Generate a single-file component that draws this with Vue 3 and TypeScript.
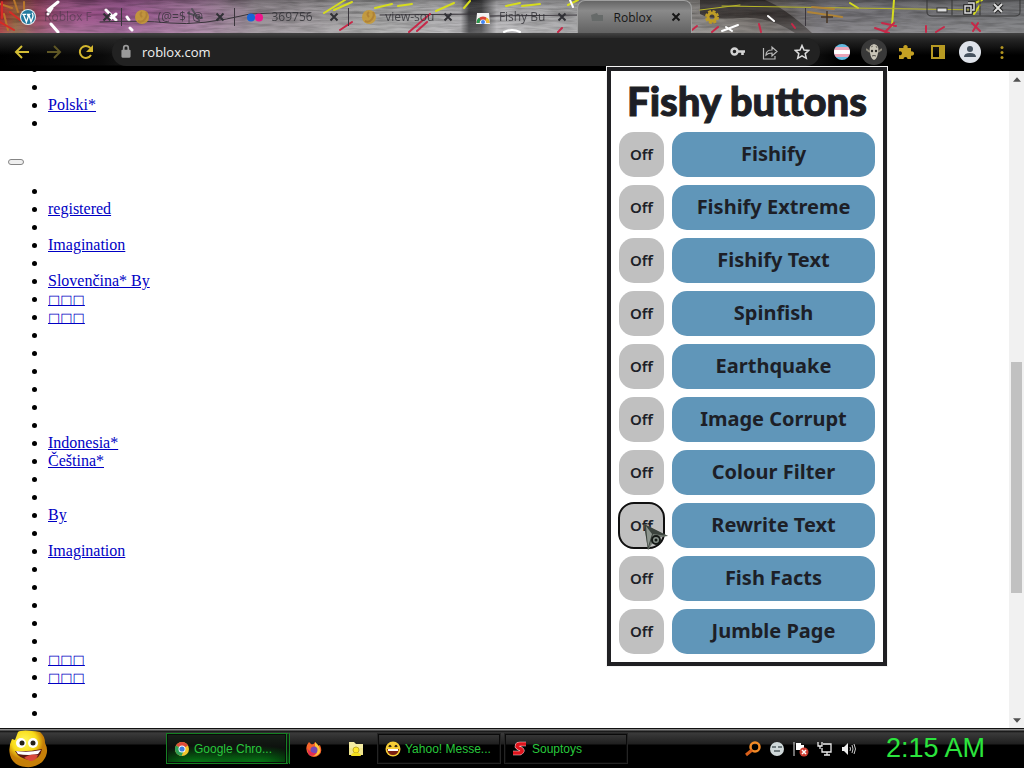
<script setup lang="ts">
import { ref } from 'vue'

interface Tab { title: string; icon: string; faint?: boolean }
interface Toggle { label: string; on: boolean }

const tabs: Tab[] = [
  { title: 'Roblox F', icon: 'wordpress', faint: true },
  { title: '(@=$|@', icon: 'swirl' },
  { title: '369756', icon: 'flickr' },
  { title: 'view-sou', icon: 'swirl' },
  { title: 'Fishy Bu', icon: 'store' },
  { title: 'Roblox', icon: 'folder' },
  { title: '', icon: 'gear' },
]
const activeTab = 5

const firstList: string[] = ['', '', 'Polski*', '']
const secondList: string[] = [
  '', 'registered', '', 'Imagination', '', 'Slovenčina* By', '□□□', '□□□', '', '',
  '', '', '', '', 'Indonesia*', 'Čeština*', '', '', 'By', '',
  'Imagination', '', '', '', '', '', '□□□', '□□□', '', '',
]

const toggles = ref<Toggle[]>([
  'Fishify', 'Fishify Extreme', 'Fishify Text', 'Spinfish', 'Earthquake',
  'Image Corrupt', 'Colour Filter', 'Rewrite Text', 'Fish Facts', 'Jumble Page',
].map((label) => ({ label, on: false })))
const focused = 7

const scroll = { start: 44, size: 37 }
const flip = (t: Toggle) => { t.on = !t.on }
</script>

<template>
  <div class="desktop">
    <header class="tabstrip">
      <svg class="collage" viewBox="0 0 1024 33" preserveAspectRatio="none" aria-hidden="true">
        <defs>
          <linearGradient id="base">
            <stop offset="0" stop-color="#a8262c" /><stop offset=".015" stop-color="#8a5a34" />
            <stop offset=".035" stop-color="#93405c" /><stop offset=".06" stop-color="#9c5084" />
            <stop offset=".12" stop-color="#94508a" /><stop offset=".19" stop-color="#a0749a" />
            <stop offset=".25" stop-color="#928890" /><stop offset=".36" stop-color="#a2a2a2" />
            <stop offset=".45" stop-color="#aeadb0" /><stop offset=".458" stop-color="#3b3b3e" />
            <stop offset=".47" stop-color="#404042" /><stop offset=".485" stop-color="#b3b2b5" />
            <stop offset=".6" stop-color="#9a9a9b" /><stop offset=".7" stop-color="#817d79" />
            <stop offset=".75" stop-color="#66605c" /><stop offset=".8" stop-color="#747277" />
            <stop offset="1" stop-color="#747578" />
          </linearGradient>
          <linearGradient id="lift" x2="0" y2="1">
            <stop offset="0" stop-color="#000" stop-opacity=".25" /><stop offset=".4" stop-color="#fff" stop-opacity="0" />
            <stop offset="1" stop-color="#fff" stop-opacity=".2" />
          </linearGradient>
          <filter id="grain" x="0" y="0" width="1" height="1">
            <feTurbulence type="fractalNoise" baseFrequency=".04 .35" numOctaves="3" seed="4" />
            <feColorMatrix values="0 0 0 0 0  0 0 0 0 0  0 0 0 0 0  1.6 0 0 0 -.6" />
          </filter>
        </defs>
        <rect width="1024" height="33" fill="url(#base)" />
        <path d="M700 0H765Q785 8 812 33H795Q770 16 740 18T700 14Z" fill="#2b2624" opacity=".75" />
        <rect width="1024" height="33" filter="url(#grain)" opacity=".35" />
        <rect width="1024" height="33" fill="url(#lift)" />
        <g fill="none" stroke-linecap="round">
          <path d="M0 4L12 8 M4 14L8 30 M14 0L18 12 M24 2V14" stroke="#b8762c" stroke-width="2" />
          <path d="M0 22L14 30 M10 12L20 20 M2 2V18" stroke="#d62b26" stroke-width="2" />
          <path d="M48 10L58 2 M52 8L48 14 M51 24L58 32 M106 10L116 20 M116 14L110 19 M127 17L129 20 M130 28L132 30" stroke="#fff" stroke-width="3" />
          <path d="M100 22Q140 20 170 23T250 14Q280 12 310 13M380 15L480 14 M490 16L580 15" stroke="#38343a" stroke-width="1" />
          <path d="M192 9L199 20 M188 13L202 18" stroke="#57505c" stroke-width="2" />
          <path d="M324 13L345 0 M334 10L352 2 M375 8L392 4 M398 6L412 4 M436 11L454 3 M464 8L470 1 M506 6L520 3 M522 6L540 4 M568 5L578 0 M850 3L858 8 M894 0L892 26 M970 5L982 0 M974 14L980 5" stroke="#d6dc1e" stroke-width="2" />
          <path d="M722 6L980 10M700 10L740 5" stroke="#b8b629" stroke-width="1" />
          <path d="M808 12L842 17 M812 7L834 9" stroke="#b08436" stroke-width="2" />
          <path d="M340 30L352 22 M409 32L430 14 M417 31L427 22 M558 32L562 28 M692 30L697 26 M712 32L718 27 M759 24L761 32 M792 24L795 28 M875 28L889 33 M882 23L896 26 M885 32L894 23 M926 26V32 M936 32L944 27 M972 23L980 31 M978 23L973 31" stroke="#c72848" stroke-width="2" />
          <path d="M722 31L738 25 M726 27L732 31 M768 16L774 21 M504 32Q512 28 520 32 M570 0L573 7" stroke="#fff" stroke-width="2" />
          <path d="M927 0V12Q927 16 932 16H1015Q1020 16 1020 12V0M952 0V15M980 0V15" stroke="#353535" stroke-width="1" />
        </g>
      </svg>

      <nav class="tabs" role="tablist" aria-label="Tabs">
        <div v-for="(tab, i) in tabs" :key="i" class="tab" :class="{ active: i === activeTab, plain: i === 3 || i + 1 === activeTab, faint: tab.faint }">
          <button class="tab-main" role="tab" :aria-selected="i === activeTab" :aria-label="tab.title || 'Settings'">
            <svg class="fav" viewBox="0 0 16 16" aria-hidden="true">
              <g v-if="tab.icon === 'wordpress'">
                <circle cx="8" cy="8" r="8" fill="#e6f1f5" /><circle cx="8" cy="8" r="7" fill="#22799e" />
                <path d="M2.3 5.3H6M3.4 5.3L6.4 13L8.3 7.5L7.4 5.3H10.5M8.8 5.3L11 13L13 7.6Q13.2 5.7 12.1 3.7" fill="none" stroke="#fff" stroke-width="1.3" />
              </g>
              <g v-else-if="tab.icon === 'swirl'">
                <circle cx="8" cy="8" r="7" fill="#c69a35" opacity=".9" />
                <path d="M4 12Q8 14 11 10T12 3M8 3Q5 5 8 8" fill="none" stroke="#b08236" stroke-width="2" />
              </g>
              <g v-else-if="tab.icon === 'flickr'">
                <circle cx="4" cy="8.500" r="4" fill="#1765d6" /><circle cx="12" cy="8.500" r="4" fill="#f0148b" />
              </g>
              <g v-else-if="tab.icon === 'store'">
                <path d="M2 4H14L15 15H1Z" fill="#f1f1f1" /><path d="M3 14A5 5 0 0 1 13 14" fill="none" stroke="#db4437" stroke-width="3" />
                <path d="M3 14Q3 11 5 10" fill="none" stroke="#269a50" stroke-width="3" /><path d="M11 10Q13 11 13 14" fill="none" stroke="#f4c432" stroke-width="3" />
                <circle cx="8" cy="13" r="2" fill="#4285f4" />
              </g>
              <path v-else-if="tab.icon === 'folder'" d="M1 6L7 4L8 6H13V12H2Z" fill="#666a69" />
              <g v-else fill="none" stroke="#bd9c27">
                <circle cx="8" cy="8" r="4" stroke-width="3" /><circle cx="8" cy="8" r="6" stroke-width="2" stroke-dasharray="3 1.7" />
              </g>
            </svg>
            <span class="tab-title">{{ tab.title }}</span>
          </button>
          <button v-if="tab.title" class="close" aria-label="Close tab">
            <svg viewBox="0 0 10 10"><path d="M1.5 1.5L8.5 8.5M8.5 1.5L1.5 8.5" stroke="currentColor" stroke-width="2" /></svg>
          </button>
        </div>
      </nav>
      <button class="new-tab" aria-label="New tab"><svg viewBox="0 0 12 12"><path d="M6 0V12M0 6H12" stroke="#453424" stroke-width="1.500" /></svg></button>
      <div class="window-buttons">
        <button aria-label="Minimize"><svg viewBox="0 0 16 16"><rect x="3" y="8" width="10" height="4" fill="#ddd" stroke="#333" /></svg></button>
        <button aria-label="Restore"><svg viewBox="0 0 16 16"><g fill="none"><path d="M6 3H12V10H10M3 6H9V13H3Z" stroke="#222" stroke-width="3.500" /><path d="M6 3H12V10H10M3 6H9V13H3Z" stroke="#ddd" stroke-width="1.500" /></g></svg></button>
        <button aria-label="Close"><svg viewBox="0 0 16 16"><g fill="none"><path d="M4 4L12 12M12 4L4 12" stroke="#222" stroke-width="4" /><path d="M4 4L12 12M12 4L4 12" stroke="#ddd" stroke-width="2" /></g></svg></button>
      </div>
    </header>

    <div class="toolbar">
      <div class="nav-buttons">
        <button aria-label="Back"><svg viewBox="0 0 16 16"><path d="M15 8H2M8 2L2 8L8 14" fill="none" stroke="#d3bd35" stroke-width="2" /></svg></button>
        <button aria-label="Forward"><svg viewBox="0 0 16 16"><path d="M1 8H14M8 2L14 8L8 14" fill="none" stroke="#5f5725" stroke-width="2" /></svg></button>
        <button aria-label="Reload"><svg viewBox="0 0 16 16"><path d="M13 11A6 6 0 1 1 12.4 4" fill="none" stroke="#d3b62e" stroke-width="2" /><path d="M15 1V8H8Z" fill="#d3b62e" /></svg></button>
      </div>
      <div class="address">
        <svg class="lock" viewBox="0 0 10 14" aria-hidden="true"><rect x="1" y="5" width="8" height="7" rx="1" fill="#9b9b9b" /><path d="M3 6V3.5A2 2 0 0 1 7 3.5V6" fill="none" stroke="#9b9b9b" stroke-width="1.5" /></svg>
        <input type="text" value="roblox.com" aria-label="Address" />
        <button aria-label="Passwords"><svg viewBox="0 0 16 16"><circle cx="4.5" cy="7.5" r="3" fill="none" stroke="#d4d4d4" stroke-width="2.4" /><path d="M7 7.5H15M12.5 7V11" stroke="#d4d4d4" stroke-width="2.6" /></svg></button>
        <button aria-label="Share"><svg viewBox="0 0 16 16"><path d="M1.5 4V15H13V12M4 11Q4 6 10 6V3L15 7.5L10 12V9Q6 9 4 11Z" fill="none" stroke="#b9b9b9" stroke-width="1.2" /></svg></button>
        <button aria-label="Bookmark"><svg viewBox="0 0 16 16"><path d="M8 1.5L10 6L14.8 6.4L11.2 9.6L12.3 14.3L8 11.8L3.7 14.3L4.8 9.6L1.2 6.4L6 6Z" fill="none" stroke="#ddd" stroke-width="1.5" /></svg></button>
      </div>
      <div class="extensions">
        <button aria-label="Flag extension"><svg viewBox="0 0 16 16"><clipPath id="disc"><circle cx="8" cy="8" r="8" /></clipPath><g clip-path="url(#disc)"><path fill="#62b9df" d="M0 0H16V16H0Z" /><path fill="#eba5b8" d="M0 3H16V13H0Z" /><path fill="#fff" d="M0 6H16V10H0Z" /></g></svg></button>
        <button class="current" aria-label="Fishy buttons"><svg viewBox="0 0 16 16"><path d="M0 5L4 8M16 5L12 8" stroke="#8b877a" stroke-width="2" /><path d="M8 0Q14 1 12 9Q11 15 8 16Q5 15 4 9Q2 1 8 0Z" fill="#c8c4b7" /><path d="M5 3L7 2M10 2L11 4" stroke="#777368" /><circle cx="6" cy="7" r="1.2" fill="#2b2926" /><circle cx="10" cy="7" r="1.2" fill="#2b2926" /><path d="M6 12Q8 11 10 12" fill="none" stroke="#514d47" /></svg></button>
        <button aria-label="Extensions"><svg viewBox="0 0 16 16"><path d="M2 4H5.5A2.2 2.2 0 1 1 9.5 4H13V7.5A2.2 2.2 0 1 1 13 11.5V15H9.5A2 2 0 1 0 5.5 15H1V11A2 2 0 1 0 1 7.500V4Z" fill="#c4a023" /></svg></button>
        <button aria-label="Side panel"><svg viewBox="0 0 16 16"><path d="M2 2H14V14H2Z" fill="none" stroke="#b79a22" stroke-width="2" /><path d="M9 2H14V14H9Z" fill="#b79a22" /></svg></button>
        <button aria-label="Profile"><svg class="avatar" viewBox="0 0 22 22"><circle cx="11" cy="11" r="11" fill="#dfe3ea" /><circle cx="11" cy="8" r="3" fill="#46525f" /><path d="M5 16Q5 12 11 12T17 16Z" fill="#46525f" /></svg></button>
        <button aria-label="Menu"><svg viewBox="0 0 16 16" fill="#b39520"><circle cx="8" cy="3.500" r="1.500" /><circle cx="8" cy="8.500" r="1.500" /><circle cx="8" cy="13.500" r="1.500" /></svg></button>
      </div>
    </div>

    <div class="viewport">
      <main class="page">
        <ul class="first">
          <li v-for="(item, i) in firstList" :key="i"><a v-if="item" href="#">{{ item }}</a></li>
        </ul>
        <div class="blank-line"><button class="tiny" aria-label="More"></button></div>
        <ul>
          <li v-for="(item, i) in secondList" :key="i"><a v-if="item" href="#" :class="{ boxes: item === '□□□' }">{{ item }}</a></li>
        </ul>
      </main>
      <div class="scrollbar">
        <button aria-label="Scroll up"><svg viewBox="0 0 9 5"><path d="M0 5L4.500 0L9 5Z" fill="#505050" /></svg></button>
        <div class="track">
          <div class="thumb" :style="{ top: scroll.start + '%', height: scroll.size + '%' }"></div>
        </div>
        <button aria-label="Scroll down"><svg viewBox="0 0 9 5"><path d="M0 0L4.500 5L9 0Z" fill="#505050" /></svg></button>
      </div>
    </div>

    <section class="popup" aria-labelledby="popup-title">
      <h1 id="popup-title">Fishy buttons</h1>
      <div v-for="(t, i) in toggles" :key="t.label" class="toggle-row">
        <button class="state" :class="{ focused: i === focused }" :aria-label="t.label + ' state'" @click="flip(t)">
          {{ t.on ? 'On' : 'Off' }}
          <svg v-if="i === focused" class="cursor" viewBox="0 0 26 28" aria-hidden="true">
            <path d="M1 1L25 13L13 15L5 27Z" fill="#747c74" /><path d="M1 1L25 13L10 11L5 27Z" fill="#3b433d" />
            <path d="M3 3L9 11L5 24Z" fill="#8d958e" />
            <circle cx="13" cy="17" r="4" fill="#87918a" stroke="#151a17" stroke-width="2" /><circle cx="13" cy="17" r="1.500" fill="#151a17" />
          </svg>
        </button>
        <button class="action" @click="flip(t)">{{ t.label }}</button>
      </div>
    </section>

    <footer class="taskbar">
      <button class="start" aria-label="Start">
        <svg viewBox="0 0 40 38"><defs><radialGradient id="face" cx=".4" cy=".3"><stop offset="0" stop-color="#fff95e" /><stop offset=".65" stop-color="#f9dc19" /><stop offset="1" stop-color="#c67f08" /></radialGradient></defs>
          <path d="M10 2Q14 -1 32 2Q37 6 37 13Q42 22 35 31Q28 38 18 37Q5 36 2 25Q0 17 4 9L7 10Z" fill="url(#face)" />
          <circle cx="13" cy="13" r="5" fill="#fff" /><circle cx="25" cy="13" r="5" fill="#fff" /><circle cx="14" cy="13" r="2.500" fill="#242018" /><circle cx="25" cy="13" r="2.500" fill="#242018" />
          <path d="M7 21Q20 22 34 19Q32 30 22 30Q11 29 7 21Z" fill="#5a1710" /><path d="M8 21Q20 23 33 20L30 24Q20 26 10 24Z" fill="#fff" /><path d="M16 28Q22 23 30 25Q28 31 22 31Z" fill="#d8483a" /></svg>
      </button>
      <div class="tasks">
        <button class="task lit">
          <svg viewBox="0 0 16 16" aria-hidden="true"><circle cx="8" cy="8" r="7" fill="#f3c62f" /><path d="M8 8L2 4.400A7 7 0 0 1 14 4.400Z" fill="#de4b3b" /><path d="M8 8L2 4.400A7 7 0 0 0 7.500 15L10 9Z" fill="#2f9f56" /><circle cx="8" cy="8" r="3.500" fill="#fff" /><circle cx="8" cy="8" r="2.600" fill="#3e7de0" /></svg>
          <span>Google Chro...</span>
        </button>
        <button class="quick" aria-label="Firefox">
          <svg viewBox="0 0 16 16"><path d="M1 4L3 1L5 3Q8 4 9 1L12 5L14 4Q17 11 13 14Q8 18 3 14Q-1 10 1 4Z" fill="#f5652b" /><path d="M9 1Q15 6 14 11Q12 15 8 15Q13 11 9 5Z" fill="#ffc43a" /><circle cx="8" cy="9" r="3.500" fill="#7549b5" /><path d="M1 7Q5 13 11 12Q7 16 3 14Z" fill="#e12e55" /></svg>
        </button>
        <button class="quick" aria-label="Folder">
          <svg viewBox="0 0 16 16"><path d="M1 1H6L8 3H15V14H1Z" fill="#f5eca3" /><path d="M1 7H15V14H1Z" fill="#efe58c" /><circle cx="8" cy="9" r="3" fill="#ffe928" stroke="#c3ab24" /><path d="M3 15Q4 11 8 12Q12 11 13 15Z" fill="#f3df1d" /></svg>
        </button>
        <button class="task">
          <svg viewBox="0 0 16 16" aria-hidden="true"><circle cx="8" cy="8" r="7.500" fill="#f6cd35" /><path d="M4 6Q5 3 6 6M10 6Q11 3 12 6" fill="none" stroke="#342512" stroke-width="1.500" /><path d="M2 8H14Q13 14 8 14T2 8Z" fill="#781d12" /><path d="M3 8H13V10H3Z" fill="#fff" /></svg>
          <span>Yahoo! Messe...</span>
        </button>
        <button class="task">
          <svg viewBox="0 0 16 16" aria-hidden="true"><path d="M14 3H8Q5 3 5 5.500Q6 7 9 8Q12 10 8 12H1" fill="none" stroke="#f0dada" stroke-width="4.500" /><path d="M14 3H8Q5 3 5 5.500Q6 7 9 8Q12 10 8 12H1" fill="none" stroke="#e0141d" stroke-width="3.500" /></svg>
          <span>Souptoys</span>
        </button>
      </div>
      <div class="tray">
        <svg viewBox="0 0 16 16"><circle cx="10" cy="6" r="4.500" fill="none" stroke="#f28a26" stroke-width="2.500" /><path d="M7 9L1 14" stroke="#d9601b" stroke-width="3" /></svg>
        <svg viewBox="0 0 16 16"><circle cx="8" cy="8" r="7" fill="#cfd8d9" /><path d="M3 6H7M9 6H13M5 10H11" fill="none" stroke="#515c60" stroke-width="1.300" /></svg>
        <svg viewBox="0 0 16 16"><path d="M1 1V15" stroke="#ddd" /><path d="M3 2H8V4H11V9H3Z" fill="#fff" /><circle cx="11" cy="11" r="4.500" fill="#cf3e32" /><path d="M9 9L13 13M13 9L9 13" stroke="#fff" stroke-width="1.500" /></svg>
        <svg viewBox="0 0 16 16"><path d="M6 3H14V11H5V7M10 11V14M7 14H13M1 1V5H5V1M3 5V8" fill="none" stroke="#ececec" stroke-width="1.300" /></svg>
        <svg viewBox="0 0 16 16"><path d="M1 6H3L7 2V14L3 10H1Z" fill="#eee" /><path d="M9 6Q10 8 9 10M11 4Q13 8 11 12M13 3Q16 8 13 13" fill="none" stroke="#ccc" /></svg>
      </div>
      <time class="clock">2:15 AM</time>
    </footer>
  </div>
</template>

<style>
html, body { margin: 0; background: #fff; }
</style>

<style scoped>
* { box-sizing: border-box; }
.desktop { position: relative; display: flex; flex-direction: column; height: 100vh; min-height: 360px; overflow: hidden; background: #fff; }
button { border: 0; padding: 0; margin: 0; background: none; font: inherit; color: inherit; cursor: default; }
svg { display: block; flex: none; }

.tabstrip { position: relative; display: flex; flex: none; height: 33px; background: #777; font-family: "Open Sans", "Noto Sans", sans-serif; font-size: 12px; color: #303035; }
.collage { position: absolute; inset: 0; width: 100%; height: 100%; }
.tabs { position: relative; display: flex; flex: 0 1 798px; min-width: 0; margin-left: 8px; }
.tab { display: flex; flex: 1 1 0; min-width: 0; align-items: center; padding: 0 10px 0 12px; background: linear-gradient(#3b363d, #3b363d) right center / 1px 18px no-repeat; }
.tab.plain { background: none; }
.tab.active { border: 1px solid #a0a0a0; border-bottom: 0; border-radius: 8px 8px 0 0; background: linear-gradient(#656565, #8a8a8a 30%, #626262); color: #161616; }
.tab-main { display: flex; flex: 1; min-width: 0; align-items: center; gap: 8px; height: 32px; }
.fav { width: 16px; height: 16px; }
.tab-title { overflow: hidden; white-space: nowrap; opacity: .8; }
.tab.active .tab-title { opacity: 1; }
.tab.faint .tab-title { opacity: .45; }
.close svg { width: 10px; height: 10px; }
.tab.faint .close { color: #303035; }
.new-tab { position: relative; margin-left: 15px; }
.new-tab svg { width: 12px; height: 12px; }
.window-buttons { position: relative; display: flex; gap: 12px; height: 16px; margin-left: auto; padding-right: 18px; }
.window-buttons svg { width: 16px; height: 16px; }

.toolbar { display: flex; flex: none; align-items: center; height: 38px; background: linear-gradient(#424242, #262626 6px, transparent 22px), linear-gradient(transparent 32px, #000 33px), linear-gradient(90deg, #000, #0a0a0a 10%, #222 15%, #222 76%, #000 82%); }
.toolbar svg { width: 16px; height: 16px; }
.nav-buttons { display: flex; gap: 16px; padding: 0 18px 0 14px; }
.address { display: flex; flex: 1; min-width: 0; align-items: center; gap: 16px; height: 28px; padding: 0 10px 0 8px; border-radius: 14px; background: #222; }
.toolbar .lock { width: 12px; height: 16px; }
.address input { flex: 1; min-width: 0; margin-left: -6px; padding: 0; border: 0; outline: 0; background: none; color: #f0f0f0; font: 13px "Open Sans", "Noto Sans", sans-serif; }
.extensions { display: flex; gap: 6px; padding: 0 9px 0 9px; }
.extensions button { display: grid; place-items: center; width: 26px; height: 26px; border-radius: 50%; }
.extensions .current { background: #393939; }
.toolbar .avatar { width: 22px; height: 22px; }

.viewport { display: flex; flex: 1; min-height: 0; overflow: hidden; background: #fff; }
.page { flex: 1; min-width: 0; overflow: hidden; padding: 0 8px; font: 16px/18px "Liberation Serif", serif; color: #000; }
.page ul { margin: 16px 0; padding-left: 40px; list-style: disc; }
.page .first { margin-top: -11px; }
.page li { height: 18px; }
.page a { color: #0000c4; text-decoration: underline; }
.page .boxes { font-family: "DejaVu Sans", sans-serif; font-size: 13px; }
.blank-line { display: flex; align-items: flex-end; height: 18px; }
.tiny { width: 16px; height: 6px; margin-bottom: 1px; border: 1px solid #858585; border-radius: 3px; background: #efefef; }
.scrollbar { display: flex; flex: none; flex-direction: column; width: 15px; background: #f1f1f1; }
.scrollbar button { display: grid; place-items: center; height: 16px; }
.scrollbar svg { width: 8px; height: 5px; }
.track { position: relative; flex: 1; }
.thumb { position: absolute; left: 2px; right: 2px; background: #c1c1c1; }

.popup { position: absolute; top: 67px; right: 137px; width: 280px; padding: 0 8px; border: 4px solid #202023; outline: 1px solid #f4f4f4; background: #fff; color: #1d1f27; font-family: "Noto Sans", "Open Sans", sans-serif; }
.popup h1 { margin: 0; font: 900 40px/61px Lato, sans-serif; text-align: center; white-space: nowrap; -webkit-text-stroke: 1px #1f1f23; }
.toggle-row { display: flex; gap: 8px; margin-bottom: 8px; }
.state { position: relative; flex: none; width: 45px; height: 45px; padding-bottom: 2px; border-radius: 15px; background: #c0c0c0; font-size: 15px; font-weight: 600; }
.state.focused { outline: 2px solid #101010; outline-offset: -1px; }
.action { flex: 1; height: 45px; padding-bottom: 2px; border-radius: 15px; background: #6096b9; font-size: 20px; font-weight: 700; }
.cursor { position: absolute; left: 24px; top: 20px; width: 26px; height: 28px; z-index: 1; }

.taskbar { display: flex; flex: none; align-items: center; height: 40px; border-top: 1px solid #111; background: linear-gradient(#888 0 1px, #111 2px, #3a3a3a 4px, #202020 15px, #000 16px); color: #28c83c; font: 12px "Liberation Sans", sans-serif; }
.start { margin-left: 8px; }
.start svg { width: 40px; height: 38px; }
.tasks { display: flex; align-items: center; margin-left: 118px; }
.task { display: flex; align-items: center; gap: 4px; width: 124px; height: 31px; margin-right: 3px; padding: 0 7px; border: 1px solid #242424; box-shadow: inset 0 0 0 1px #0a0a0a; white-space: nowrap; }
.task svg, .quick svg, .tray svg { width: 16px; height: 16px; }
.task.lit { border-color: #168023; border-right: 4px double #168023; background: radial-gradient(ellipse at 25% 110%, #079319, transparent 45%), radial-gradient(ellipse at 75% 110%, #079319, transparent 45%), linear-gradient(#182019, #000); }
.quick { display: grid; place-items: center; width: 42px; height: 31px; }
.tray { display: flex; gap: 8px; margin-left: auto; }
.clock { padding: 0 39px 0 29px; font-size: 27px; color: #2be53d; white-space: nowrap; }
</style>
